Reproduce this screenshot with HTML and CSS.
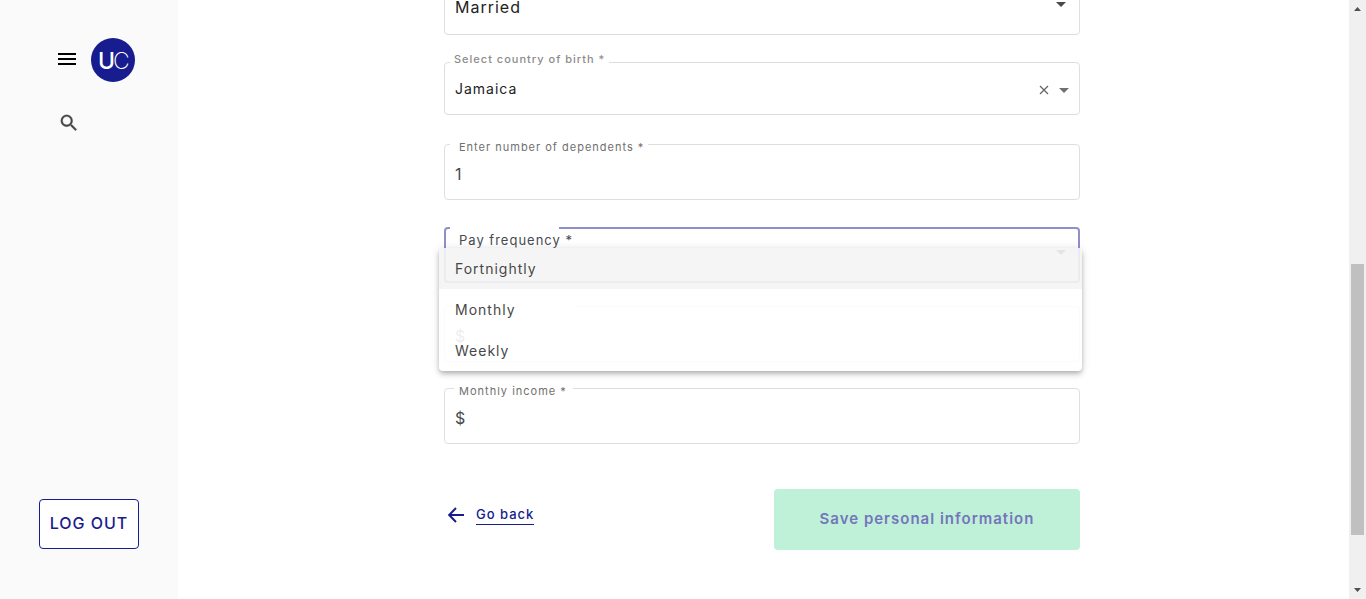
FILE: index.html
```html
<!DOCTYPE html>
<html lang="en">
<head>
<meta charset="utf-8">
<title>Personal information</title>
<link rel="stylesheet" href="styles.css">
</head>
<body>
<div class="app">
  <aside class="sidebar">
    <div class="brand">
      <button class="icon-button menu-toggle" type="button" aria-label="Menu">
        <svg width="20" height="14" viewBox="0 0 20 14"><path d="M1 2h18M1 7h18M1 12h18" stroke="#000" stroke-width="2"/></svg>
      </button>
      <a class="logo" href="#" aria-label="UC home">
        <svg width="44" height="44" viewBox="0 0 44 44">
          <circle cx="22" cy="22" r="22" fill="#171c8f"/>
          <text class="logo-u" x="7" y="31">U</text>
          <text class="logo-c" x="22" y="31">C</text>
        </svg>
      </a>
    </div>
    <button class="icon-button search" type="button" aria-label="Search">
      <svg width="22" height="22" viewBox="0 0 24 24"><path fill="#454545" stroke="#454545" stroke-width=".3" d="M15.5 14h-.79l-.28-.27A6.47 6.47 0 0 0 16 9.5 6.5 6.5 0 1 0 9.5 16c1.61 0 3.09-.59 4.23-1.57l.27.28v.79l5 4.99L20.49 19zm-6 0C7.01 14 5 11.99 5 9.5S7.01 5 9.5 5 14 7.01 14 9.5 11.99 14 9.5 14z"/></svg>
    </button>
    <button class="logout" type="button">LOG OUT</button>
  </aside>

  <main class="content">
    <form class="form">
      <div class="field">
        <select class="control large dark" aria-label="Marital status"><option>Married</option></select>
        <svg class="caret" width="10" height="5" viewBox="0 0 10 5"><path d="M0 0h10L5 5z"/></svg>
      </div>

      <div class="field combo">
        <input class="control dark" id="country" type="text" value="Jamaica">
        <span class="notch country-notch"></span>
        <label class="label bold" for="country">Select country of birth *</label>
        <div class="tools">
          <button class="icon-button" type="button" aria-label="Clear">
            <svg width="10" height="10" viewBox="0 0 10 10"><path d="M1 1l8 8M9 1L1 9" stroke="#666" stroke-width="1.3"/></svg>
          </button>
          <svg width="10" height="5" viewBox="0 0 10 5"><path d="M0 0h10L5 5z" fill="#707070"/></svg>
        </div>
      </div>

      <div class="field">
        <input class="control large" id="dependents" type="text" value="1">
        <span class="notch dependents-notch"></span>
        <label class="label inset" for="dependents">Enter number of dependents *</label>
      </div>

      <div class="field active">
        <select class="control" id="frequency"><option></option></select>
        <span class="notch frequency-notch"></span>
        <label class="label inset resting" for="frequency">Pay frequency *</label>
        <svg class="caret" width="10" height="5" viewBox="0 0 10 5"><path d="M0 0h10L5 5z"/></svg>
        <ul class="menu" role="listbox" aria-label="Pay frequency">
          <li class="option highlighted" role="option">Fortnightly</li>
          <li class="option" role="option">Monthly</li>
          <li class="option" role="option">Weekly</li>
        </ul>
      </div>

      <div class="field">
        <input class="control large" type="text" value="$" aria-label="Income">
        <span class="notch income-notch"></span>
      </div>

      <div class="field">
        <input class="control large" id="income" type="text" value="$">
        <span class="notch income-notch"></span>
        <label class="label inset" for="income">Monthly income *</label>
      </div>

      <div class="actions">
        <a class="back" href="#">
          <svg width="16" height="16" viewBox="0 0 16 16"><path d="M16 8H1.5M8 1L1.2 8 8 15" fill="none" stroke="#171c8f" stroke-width="2"/></svg>
          <span class="back-text">Go back</span>
        </a>
        <button class="save" type="submit" disabled>Save personal information</button>
      </div>
    </form>
  </main>

  <div class="scrollbar" aria-hidden="true">
    <svg width="7" height="4" viewBox="0 0 7 4"><path d="M0 4h7L3.5 0z" fill="#505050"/></svg>
    <div class="track"><div class="thumb"></div></div>
    <svg width="7" height="4" viewBox="0 0 7 4"><path d="M0 0h7L3.5 4z" fill="#505050"/></svg>
  </div>
</div>
</body>
</html>
```
FILE: styles.css
```css
* { box-sizing: border-box; }

body {
  margin: 0;
  background: #fff;
  color: #454a4f;
  font: 14px/20px Inter, "Liberation Sans", sans-serif;
  letter-spacing: 1px;
}

button, input, select { font: inherit; letter-spacing: inherit; color: inherit; }
svg { display: block; }

.app { display: flex; height: 100vh; overflow: hidden; }

.sidebar {
  display: flex;
  flex-direction: column;
  align-items: flex-start;
  flex: 0 0 178px;
  padding: 38px 39px 50px;
  background: #fafafa;
}
.brand { display: flex; align-items: center; gap: 14px; margin-left: 18px; }
.icon-button { padding: 0; border: 0; background: none; cursor: pointer; }
.menu-toggle { padding-bottom: 2px; }
.logo-u, .logo-c { fill: #fff; font-size: 23px; letter-spacing: 0; }
.logo-u { font-weight: 500; }
.logo-c { font-weight: 200; }
.search { margin: 30px 0 0 19px; }
.logout {
  width: 100%;
  height: 50px;
  margin-top: auto;
  padding: 0 0 2px;
  border: 1px solid #171c8f;
  border-radius: 4px;
  background: #fff;
  color: #171c8f;
  font-size: 16px;
  font-weight: 500;
}

.content { flex: 1; min-width: 0; padding: 0 19px 0 16px; }
.form { max-width: 636px; margin: -21px auto 0; }

.field { position: relative; height: 56px; margin-bottom: 27px; }
.field.combo { height: 53px; margin-bottom: 29px; }
.field.active { margin-bottom: 23px; }
.field.active + .field { margin-bottom: 26px; }
.control {
  display: block;
  width: 100%;
  height: 100%;
  padding: 4px 10px 0;
  border: 1px solid #dedede;
  border-radius: 4px;
  outline: 0;
  background: transparent;
  appearance: none;
}
.large { font-size: 16px; }
.dark { padding-top: 0; color: #222; }
.active .control { border: 2px solid #8f90c9; }

.label {
  position: absolute;
  top: -13px;
  left: 10px;
  color: #8c8c8c;
  font-size: 11px;
}
.label.bold { font-weight: 500; }
.label.inset { top: -7px; left: 15px; color: #707070; }
.label.resting { z-index: 2; top: 3px; color: #454a4f; font-size: 13px; }
.notch {
  position: absolute;
  top: 0;
  left: 6px;
  height: 2px;
  background: #fff;
}
.country-notch { width: 159px; }
.dependents-notch { width: 198px; }
.frequency-notch { width: 109px; }
.income-notch { left: 10px; width: 119px; }

.caret { position: absolute; top: 23px; right: 14px; fill: #454a4f; }
.tools {
  position: absolute;
  top: 23px;
  right: 11px;
  display: flex;
  align-items: center;
  gap: 10px;
}

.menu {
  position: absolute;
  z-index: 1;
  top: 21px;
  left: -5px;
  right: -2px;
  margin: 0;
  padding: 0;
  overflow: hidden;
  border-radius: 4px;
  background: #fff;
  box-shadow: 0 2px 4px -1px #0003, 0 4px 5px #0002, 0 1px 10px #0002;
  list-style: none;
  opacity: 0.9;
}
.option { padding: 11px 16px 10px; color: #333; }
.highlighted { background: #f5f5f5; }

.actions { display: flex; justify-content: space-between; margin-top: 45px; }
.back {
  display: flex;
  align-items: center;
  align-self: flex-start;
  gap: 12px;
  padding: 15px 4px;
  color: #171c8f;
  font-size: 13px;
  font-weight: 500;
  text-decoration: none;
}
.back-text { border-bottom: 1px solid #171c8f; }
.save {
  flex: 0 1 306px;
  height: 61px;
  padding: 0 0 1px;
  border: 0;
  border-radius: 4px;
  background: #bff0d8;
  color: #7476bb;
  font-size: 15px;
  font-weight: 600;
}

.scrollbar {
  display: flex;
  flex: 0 0 17px;
  flex-direction: column;
  align-items: center;
  padding: 7px 2px;
  background: #f0f0f0;
}
.track { flex: 1; width: 100%; padding: 6px 0; }
.thumb { height: 48%; margin-top: 247px; background: #c0c0c0; }
```
